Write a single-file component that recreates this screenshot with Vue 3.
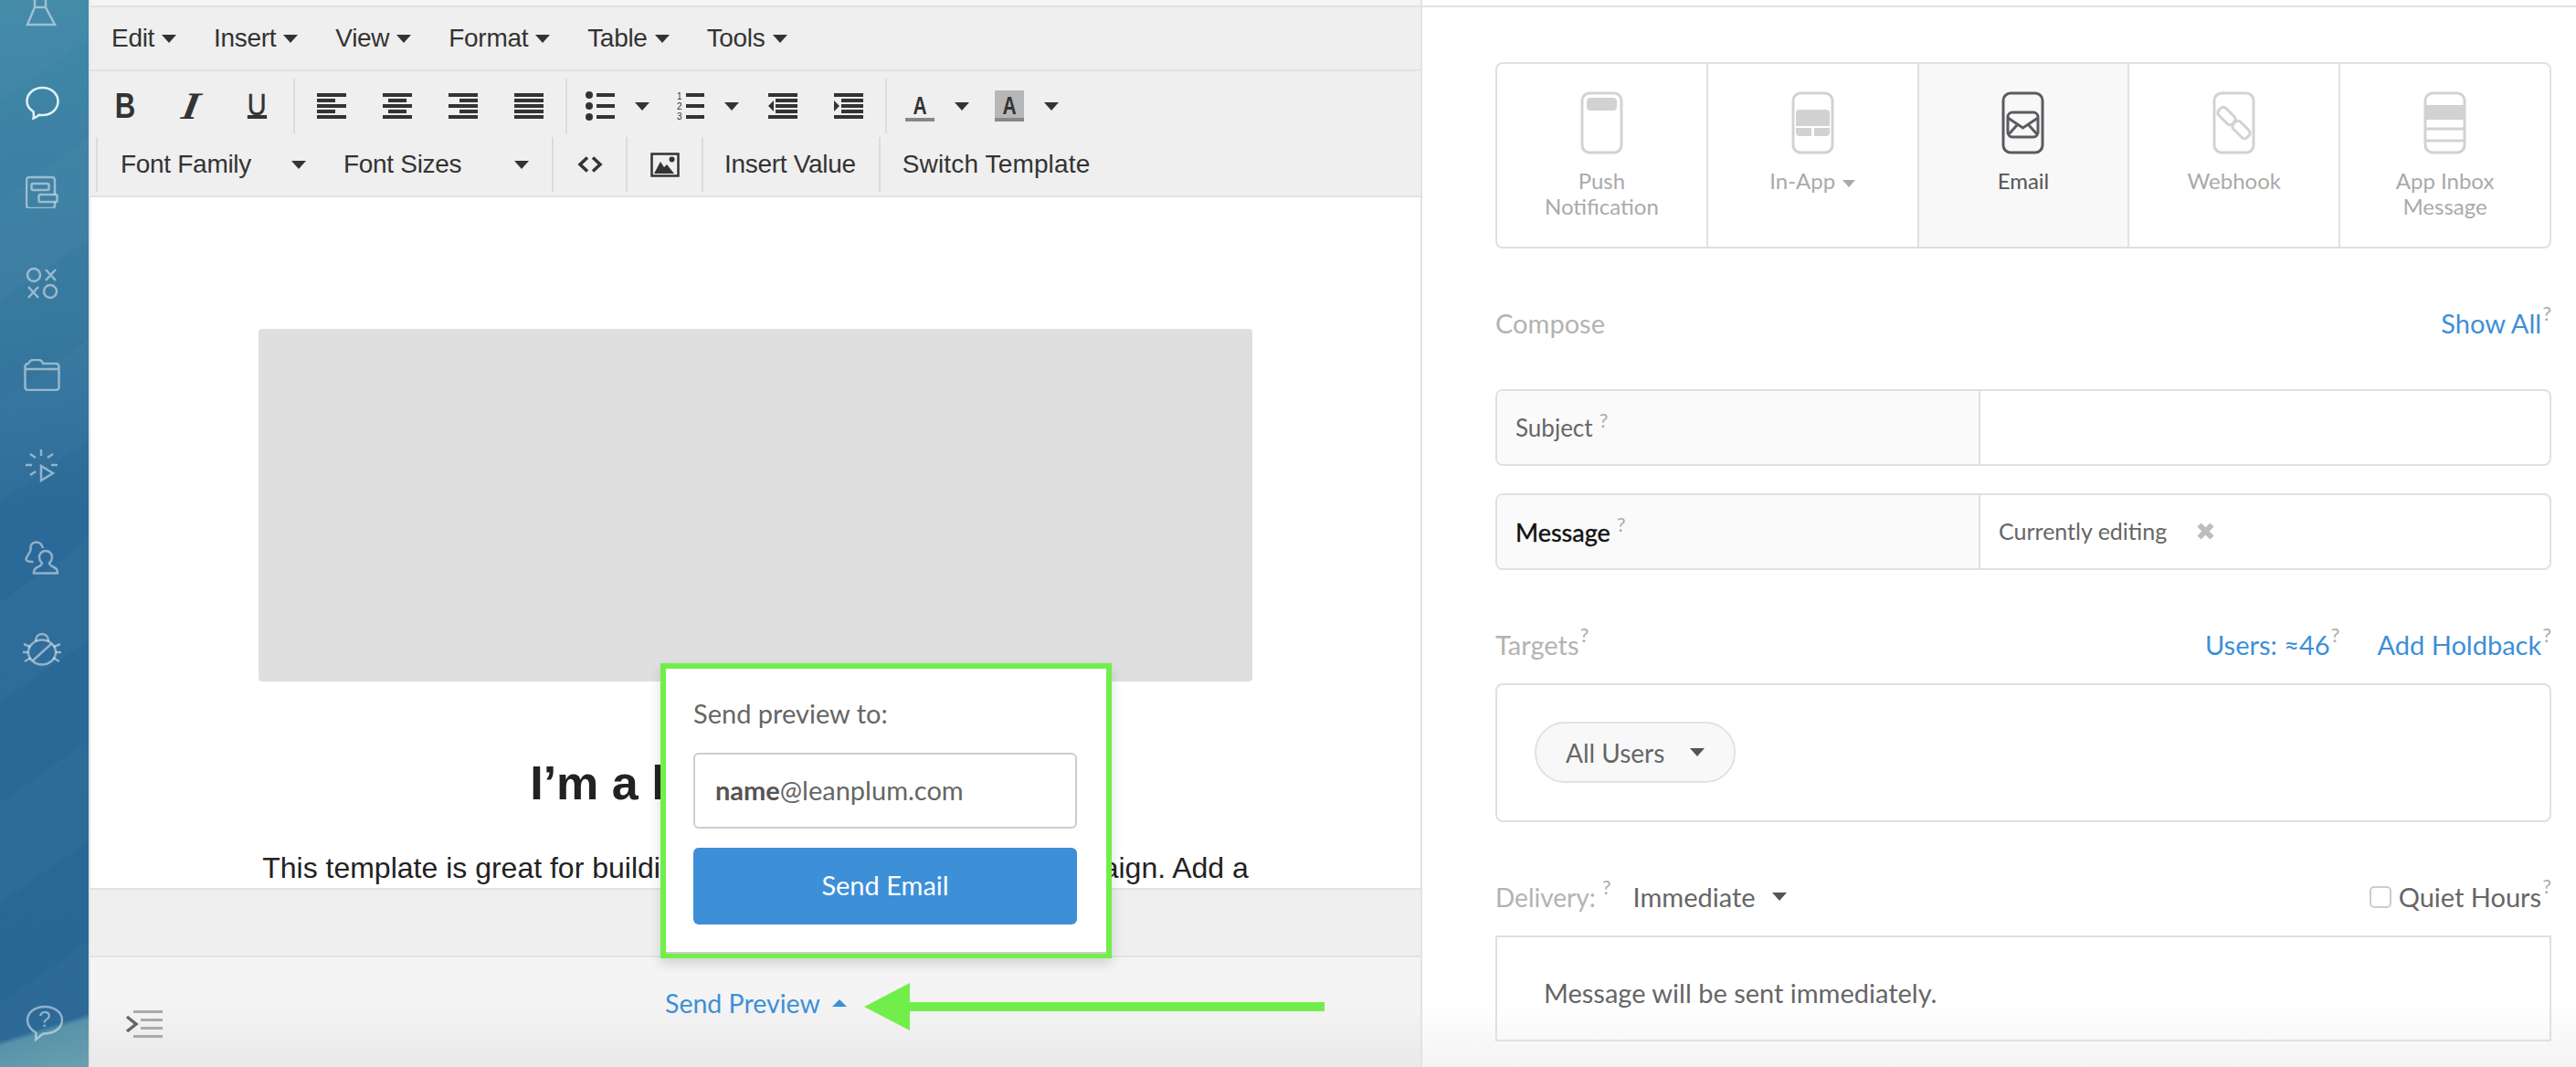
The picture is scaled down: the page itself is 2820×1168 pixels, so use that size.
<script setup>
const menus = ['Edit', 'Insert', 'View', 'Format', 'Table', 'Tools']
const rows = [2, 8, 14, 20, 26]
</script>

<template>
  <div class="app">
    <aside class="sidebar">
      <div class="slot">
        <svg width="36" height="44" viewBox="0 0 36 44" fill="none"><path d="M10 0v18L2 37h30l-10-19V0M10 18h12"/></svg>
      </div>
      <div class="slot active">
        <svg width="37" height="37" viewBox="0 0 37 37" fill="none"><path d="M8.500 28C3.500 25 1.500 21 1.500 17 1.500 8.500 9 2 18.500 2S35.500 8.500 35.500 17 28 32 18.500 32c-1.500 0-2.500-.1-3.500-.3-2 1.500-4 3-6.500 4 .7-2 .6-4 0-7.700z"/></svg>
      </div>
      <div class="slot">
        <svg width="36" height="36" viewBox="0 0 36 36" fill="none"><path d="M32 21V5a3 3 0 0 0-3-3H4a3 3 0 0 0-3 3v28a3 3 0 0 0 3 3h25a3 3 0 0 0 3-3v-4"/><rect x="6.500" y="9" width="19" height="7" rx="1.500"/><rect x="14.500" y="21" width="20" height="8" rx="1.500"/></svg>
      </div>
      <div class="slot">
        <svg width="36" height="36" viewBox="0 0 36 36" fill="none"><circle cx="9" cy="9" r="7"/><path d="M22 3l11 12M33 3L22 15M3 22l11 12M14 22L3 34"/><circle cx="27" cy="27" r="7"/></svg>
      </div>
      <div class="slot">
        <svg width="40" height="35" viewBox="0 0 40 35" fill="none"><path d="M1.500 11v20a3 3 0 0 0 3 3h31a3 3 0 0 0 3-3V8a3 3 0 0 0-3-3H21c-1-3-3-4-5-4h-6c-3 0-4 2-5 4h-.5a3 3 0 0 0-3 3v3zM1.500 11h37"/></svg>
      </div>
      <div class="slot">
        <svg width="36" height="37" viewBox="0 0 36 37" fill="none"><path d="M17 0v7M5 5l6 4M0 17h7M5 28l6-4M24 9l6-4M28 17h7"/><path d="M17 18l13 8-13 8z"/></svg>
      </div>
      <div class="slot">
        <svg width="38" height="37" viewBox="0 0 38 37" fill="none"><path d="M23 11c-4 0-7 3-7 7 0 3 1.500 5 3 6.500 0 2-2 3-5 4.500-3 1-4 3-4 6.500h26c0-3.500-1-5.500-4-6.500-3-1.500-5-2.500-5-4.500 1.500-1.500 3-3.500 3-6.500 0-4-3-7-7-7z"/><path d="M20 8c-1-4-4-7-8-6.500C8 2 6 5 6.500 9 7 13 2 16 1.500 20c0 2.500 4 3 8 3"/></svg>
      </div>
      <div class="slot">
        <svg width="42" height="37" viewBox="0 0 42 37" fill="none"><ellipse cx="21" cy="22" rx="15" ry="13.500"/><path d="M14 10c0-5 3-8 7-8s7 3 7 8M11 31L31 13M1 13l7 3M41 13l-7 3M0 22h6M42 22h-6M2 32l7-4M40 32l-7-4"/></svg>
      </div>
      <div class="slot help">
        <svg width="42" height="40" viewBox="0 0 42 40" fill="none"><path d="M21 2C10 2 2 8.500 2 16.500c0 7 5.500 12 9.500 14 0 2-.3 5-.3 7.500l8-6.500c1 .1 1.500.1 2.300 0C32 31 40 25 40 16.500 40 8.500 32 2 21 2z"/><text x="21" y="24" text-anchor="middle" class="help-q">?</text></svg>
      </div>
    </aside>

    <main class="editor">
      <div class="strip"></div>
      <nav class="menubar">
        <span v-for="m in menus" :key="m" class="menu">{{ m }}<i class="caret"></i></span>
      </nav>

      <div class="toolbar">
        <div class="row1">
          <div class="cell">
            <span class="glyph bold">B</span>
          </div>
          <div class="cell">
            <span class="glyph ital">I</span>
          </div>
          <div class="cell">
            <span class="glyph under">U</span>
          </div>
          <i class="sep"></i>
          <div class="cell">
            <svg class="ico" width="32" height="28" viewBox="0 0 32 28"><rect v-for="(y, n) in rows" :key="y" x="0" :y="y - 2" :width="n % 2 ? 20 : 32" height="4"/></svg>
          </div>
          <div class="cell">
            <svg class="ico" width="32" height="28" viewBox="0 0 32 28"><rect v-for="(y, n) in rows" :key="y" :x="n % 2 ? 6 : 0" :y="y - 2" :width="n % 2 ? 20 : 32" height="4"/></svg>
          </div>
          <div class="cell">
            <svg class="ico" width="32" height="28" viewBox="0 0 32 28"><rect v-for="(y, n) in rows" :key="y" :x="n % 2 ? 12 : 0" :y="y - 2" :width="n % 2 ? 20 : 32" height="4"/></svg>
          </div>
          <div class="cell">
            <svg class="ico" width="32" height="28" viewBox="0 0 32 28"><rect v-for="y in rows" :key="y" x="0" :y="y - 2" width="32" height="4"/></svg>
          </div>
          <i class="sep"></i>
          <div class="split">
            <svg class="ico" width="32" height="32" viewBox="0 0 32 32"><circle cx="4" cy="4" r="4"/><circle cx="4" cy="16" r="4"/><circle cx="4" cy="28" r="4"/><rect x="12" y="2" width="20" height="4"/><rect x="12" y="14" width="20" height="4"/><rect x="12" y="26" width="20" height="4"/></svg>
            <i class="caret big"></i>
          </div>
          <div class="split">
            <svg class="ico" width="32" height="32" viewBox="0 0 32 32"><text x="2" y="9" class="digit">1</text><text x="2" y="20" class="digit">2</text><text x="2" y="31" class="digit">3</text><rect x="12" y="2" width="20" height="4"/><rect x="12" y="14" width="20" height="4"/><rect x="12" y="26" width="20" height="4"/></svg>
            <i class="caret big"></i>
          </div>
          <div class="cell">
            <svg class="ico" width="32" height="28" viewBox="0 0 32 28"><rect x="0" y="0" width="32" height="4"/><rect x="8" y="6" width="24" height="4"/><rect x="8" y="12" width="24" height="4"/><rect x="8" y="18" width="24" height="4"/><rect x="0" y="24" width="32" height="4"/><path d="M0 14l6-6v12z"/></svg>
          </div>
          <div class="cell">
            <svg class="ico" width="32" height="28" viewBox="0 0 32 28"><rect x="0" y="0" width="32" height="4"/><rect x="8" y="6" width="24" height="4"/><rect x="8" y="12" width="24" height="4"/><rect x="8" y="18" width="24" height="4"/><rect x="0" y="24" width="32" height="4"/><path d="M6 14L0 8v12z"/></svg>
          </div>
          <i class="sep"></i>
          <div class="split">
            <span class="color"><span class="color-a">A</span></span>
            <i class="caret big"></i>
          </div>
          <div class="split">
            <span class="color hl"><span class="color-a">A</span></span>
            <i class="caret big"></i>
          </div>
        </div>

        <div class="row2">
          <i class="sep tall"></i>
          <div class="combo"><span>Font Family</span><i class="caret big"></i></div>
          <div class="combo"><span>Font Sizes</span><i class="caret big"></i></div>
          <i class="sep tall push"></i>
          <div class="tool code">
            <svg width="28" height="18" viewBox="0 0 28 18" fill="none"><path d="M11 1.500L3 9l8 7.500M17 1.500L25 9l-8 7.500"/></svg>
          </div>
          <i class="sep tall"></i>
          <div class="tool image">
            <svg width="32" height="27" viewBox="0 0 32 27"><rect x="1.500" y="1.500" width="29" height="24" fill="none" stroke="#333" stroke-width="2.500"/><path d="M4 23l7-13 4 6 3-3 8 10z"/><circle cx="23.500" cy="7.500" r="3"/></svg>
          </div>
          <i class="sep tall"></i>
          <div class="tool text first">Insert Value</div>
          <i class="sep tall"></i>
          <div class="tool text last">Switch Template</div>
        </div>
      </div>

      <section class="canvas">
        <div class="placeholder"></div>
        <h1 class="headline">I’m a large headline</h1>
        <p class="para">This template is great for building your next welcome email campaign. Add a</p>
      </section>

      <div class="status"></div>

      <footer class="foot">
        <svg class="indent" width="42" height="30" viewBox="0 0 42 30" fill="none"><path class="chev" d="M2 7l10 8-10 8"/><path class="lines" d="M9 1.500h32M17 10.500h24M17 19.500h24M9 28.500h32"/></svg>
        <span class="send-link">Send Preview<i class="caret up"></i></span>
      </footer>

      <div class="popover">
        <div class="pop-label">Send preview to:</div>
        <div class="pop-input"><b>name</b>@leanplum.com</div>
        <div class="pop-btn">Send Email</div>
      </div>

      <svg class="arrow" width="504" height="52" viewBox="0 0 504 52"><path d="M0 26L50 0v21h454v10H50v21z"/></svg>
    </main>

    <section class="panel">
      <div class="panel-top"></div>
      <div class="panel-body">
        <div class="tabs">
          <div class="tab">
            <svg class="phone" width="47" height="69" viewBox="0 0 47 69" fill="none"><rect x="2" y="2" width="43" height="65" rx="8"/><rect class="fill" x="7" y="7" width="33" height="14" rx="4"/></svg>
            <div class="tab-label">Push<br>Notification</div>
          </div>
          <div class="tab">
            <svg class="phone" width="47" height="69" viewBox="0 0 47 69" fill="none"><rect x="2" y="2" width="43" height="65" rx="8"/><path class="fill" d="M5 24a4 4 0 0 1 4-4h29a4 4 0 0 1 4 4v14H5zM5 40h17v9H9a4 4 0 0 1-4-4zM25 40h17v5a4 4 0 0 1-4 4H25z"/></svg>
            <div class="tab-label">In-App<i class="caret small"></i></div>
          </div>
          <div class="tab on">
            <svg class="phone dark" width="47" height="69" viewBox="0 0 47 69" fill="none"><rect x="2" y="2" width="43" height="65" rx="8"/><rect x="7" y="23" width="33" height="27" rx="5"/><path d="M7 29l16.500 11L40 29M8 47l9-10M39 47l-9-10"/></svg>
            <div class="tab-label">Email</div>
          </div>
          <div class="tab">
            <svg class="phone" width="47" height="69" viewBox="0 0 47 69" fill="none"><rect x="2" y="2" width="43" height="65" rx="8"/><rect x="5" y="21.500" width="21" height="11" rx="4" transform="rotate(45 15.500 27)"/><rect x="21" y="36.500" width="21" height="11" rx="4" transform="rotate(45 31.500 42)"/></svg>
            <div class="tab-label">Webhook</div>
          </div>
          <div class="tab">
            <svg class="phone" width="47" height="69" viewBox="0 0 47 69" fill="none"><rect x="2" y="2" width="43" height="65" rx="8"/><rect class="fill" x="2" y="15" width="43" height="16"/><path d="M2 41h43M2 54h43"/></svg>
            <div class="tab-label">App Inbox<br>Message</div>
          </div>
        </div>

        <div class="head compose">
          <span class="muted">Compose</span>
          <span class="link">Show All<sup class="q">?</sup></span>
        </div>

        <div class="field">
          <div class="field-key">Subject<sup class="q spaced">?</sup></div>
          <div class="field-val"></div>
        </div>
        <div class="field second">
          <div class="field-key strong">Message<sup class="q spaced">?</sup></div>
          <div class="field-val">
            <span class="editing">Currently editing</span>
            <svg class="close" width="19" height="19" viewBox="0 0 19 19" fill="none"><path d="M2.500 2.500l14 14M16.500 2.500l-14 14"/></svg>
          </div>
        </div>

        <div class="head targets">
          <span class="muted">Targets<sup class="q">?</sup></span>
          <span class="head-right">
            <span class="link">Users: ≈46<sup class="q">?</sup></span>
            <span class="link">Add Holdback<sup class="q">?</sup></span>
          </span>
        </div>
        <div class="box target-box">
          <div class="pill">All Users<i class="caret big"></i></div>
        </div>

        <div class="head delivery">
          <span class="del-left">
            <span class="muted del-key">Delivery:<sup class="q spaced">?</sup></span>
            <span class="plain">Immediate<i class="caret big"></i></span>
          </span>
          <span class="plain quiet"><i class="check"></i>Quiet Hours<sup class="q">?</sup></span>
        </div>
        <div class="box msg-box">Message will be sent immediately.</div>
      </div>
    </section>
  </div>
</template>

<style>
html, body { margin: 0; padding: 0; background: #fff; }
</style>

<style scoped>
.app { display: flex; width: 2820px; height: 1168px; overflow: hidden; font-family: Lato, "Open Sans", sans-serif; color: #555; background: #fff; }

.sidebar { flex: none; padding-right: 5px; width: 92px; border-right: 2px solid #e4e4e4; display: flex; flex-direction: column; align-items: center; overflow: hidden;
  background:
    linear-gradient(-17deg, rgba(120,170,178,.85) 0, rgba(100,160,176,.75) 50px, rgba(100,160,176,0) 56px),
    repeating-linear-gradient(145deg, rgba(255,255,255,.02) 0 90px, rgba(255,255,255,0) 90px 180px),
    linear-gradient(172deg, #4189a8 0, #38799f 30%, #2b6a98 48%, #286695 100%); }
.slot { flex: none; height: 100px; width: 100%; display: flex; align-items: center; justify-content: center; }
.slot:first-child { margin-top: -38px; }
.slot svg { stroke: rgba(255,255,255,.48); stroke-width: 2.500; }
.slot.active { margin-bottom: -2px; }
.slot.active svg { stroke: rgba(240,250,252,.92); }
.slot.help { margin-top: auto; height: 40px; margin-bottom: 28px; margin-left: 6px; }
.help-q { fill: rgba(255,255,255,.5); stroke: none; font: 24px "Liberation Sans", sans-serif; }

.editor { flex: none; width: 1456px; border-right: 2px solid #e2e2e2; display: flex; flex-direction: column; position: relative; font-family: "Liberation Sans", Arial, sans-serif; color: #333; }
.strip { flex: none; height: 6px; background: #f5f5f5; border-bottom: 2px solid #e2e2e2; }
.menubar { flex: none; height: 68px; background: #efefef; border-bottom: 2px solid #e2e2e2; display: flex; align-items: center; gap: 41px; padding-left: 23px; font-size: 28px; letter-spacing: -.3px; }
.menu { display: flex; align-items: center; }
.caret { display: block; flex: none; width: 0; height: 0; border-left: 8px solid transparent; border-right: 8px solid transparent; border-top: 9px solid #333; }
.menu .caret { margin-left: 8px; }
.caret.big { border-top-width: 9px; }

.toolbar { flex: none; height: 136px; background: #efefef; border-bottom: 2px solid #e2e2e2; }
.row1 { display: flex; height: 72px; padding: 8px 0 4px 2px; box-sizing: border-box; }
.cell { flex: none; width: 72px; display: flex; align-items: center; justify-content: center; }
.ico { display: block; fill: #333; }
.sep { display: block; flex: none; width: 2px; background: #dcdcdc; margin: 0 4px; }
.split { flex: none; width: 98px; display: flex; align-items: center; padding-left: 16px; box-sizing: border-box; }
.split .caret { margin-left: 22px; }
.glyph { display: block; line-height: 28px; height: 28px; color: #333; }
.bold { font: bold 39px/28px "Liberation Sans", sans-serif; transform: scaleX(.8); }
.ital { font: italic bold 42px/28px "Liberation Serif", serif; transform: skewX(-10deg) scaleX(1.15); }
.under { font: 34px/24px "Liberation Sans", sans-serif; -webkit-text-stroke: .5px #333; transform: scaleX(.85); height: 24px; line-height: 24px; border-bottom: 4px solid #333; }
.digit { font: 10px "Liberation Sans", sans-serif; fill: #333; }
.color { display: block; width: 32px; height: 34px; box-sizing: border-box; border-bottom: 4px solid #888; text-align: center; }
.color.hl { background: #b7b7b7; }
.color-a { display: block; font: bold 28px/34px "Liberation Sans", sans-serif; transform: scaleX(.75); color: #333; }

.row2 { display: flex; height: 60px; margin-left: 4px; font-size: 28px; letter-spacing: -.3px; }
.sep.tall { margin: 0; }
.sep.push { margin-left: 9px; }
.combo { flex: none; width: 244px; box-sizing: border-box; display: flex; align-items: center; justify-content: space-between; padding: 0 16px 0 25px; }
.row2 > .sep:first-child { margin-left: 2px; }
.tool { flex: none; display: flex; align-items: center; justify-content: center; }
.tool.code { width: 79px; }
.tool.code svg { stroke: #333; stroke-width: 3.500; }
.tool.image { width: 81px; }
.tool.image svg { fill: #333; }
.tool.text { padding: 0 24px; }
.tool.text.first { padding: 0 25px 0 23px; }
.tool.text.last { letter-spacing: .15px; }

.canvas { flex: 1; min-height: 0; background: #fff; overflow: hidden; display: flex; flex-direction: column; align-items: center; }
.placeholder { flex: none; width: 1088px; height: 386px; margin-top: 144px; background: #dfdfdf; border-radius: 4px; }
.headline { flex: none; margin: 81px 0 0; padding-right: 11px; font: bold 52px/60px "Liberation Sans", sans-serif; color: #222; text-align: center; }
.para { flex: none; margin: 39px 0 0; width: 1160px; font: 32px/48px "Liberation Sans", sans-serif; color: #222; text-align: center; }

.status { flex: none; height: 72px; background: #efefef; border-top: 2px solid #e2e2e2; border-bottom: 2px solid #e2e2e2; }
.foot { flex: none; height: 120px; background: linear-gradient(#f4f4f4 50px, #e9e9e9 100%); display: flex; align-items: flex-start; padding-left: 38px; box-sizing: border-box; }
.indent { display: block; margin-top: 58px; }
.chev { stroke: #666; stroke-width: 3.500; }
.lines { stroke: #aaa; stroke-width: 3; }
.send-link { margin: 34px 0 0 549px; color: #3d8fd8; font: 28.500px/32px Lato, sans-serif; display: flex; align-items: center; }
.caret.up { border-top: 0; border-bottom: 8px solid #3d8fd8; margin-left: 13px; }

.popover { position: absolute; left: 624px; top: 726px; width: 494px; height: 323px; box-sizing: border-box; border: solid #72ee4a; border-width: 6px 6px 5px; background: #fff; padding: 33px 30px 0; box-shadow: inset 0 -2px 0 #ccc, 0 6px 12px rgba(0,0,0,.14); font-family: Lato, sans-serif; color: #666; }
.pop-label { font-size: 29px; line-height: 32px; }
.pop-input { margin-top: 27px; height: 83px; width: 420px; box-sizing: border-box; border: 2px solid #ccc; border-radius: 6px; background: #fff; font-size: 29px; line-height: 78px; padding-left: 22px; }
.pop-input b { color: #555; }
.pop-btn { margin-top: 21px; height: 84px; width: 420px; border-radius: 6px; background: #3d8fd8; color: #fff; font-size: 29px; line-height: 82px; text-align: center; }
.arrow { position: absolute; left: 847px; top: 1076px; fill: #72ee4a; }

.panel { flex: 1; min-width: 0; background: linear-gradient(#fff 1100px, #f3f3f3 100%); }
.panel-top { height: 6px; border-bottom: 2px solid #e2e2e2; }
.panel-body { padding: 60px 27px 0 80px; }
.tabs { display: flex; height: 204px; box-sizing: border-box; border: 2px solid #e0e0e0; border-radius: 8px; overflow: hidden; }
.tab { flex: 1; min-width: 0; border-right: 2px solid #e0e0e0; padding-top: 30px; text-align: center; color: #aaa; font-size: 24px; line-height: 28px; }
.tab:last-child { border-right: 0; }
.tab.on { background: #f8f8f8; color: #555; }
.phone { display: block; margin: 0 auto; stroke: #d2d2d2; stroke-width: 3; }
.phone .fill { fill: #d2d2d2; stroke: none; }
.phone.dark { stroke: #5b5b60; }
.tab-label { margin-top: 15px; display: block; }
.caret.small { display: inline-block; vertical-align: middle; margin-left: 8px; border-left-width: 7px; border-right-width: 7px; border-top: 8px solid #aaa; }

.head { display: flex; justify-content: space-between; align-items: center; height: 56px; box-sizing: border-box; padding-bottom: 3px; font-size: 29px; }
.compose { margin-top: 55px; margin-bottom: 43px; }
.targets { margin-top: 55px; margin-bottom: 13px; }
.delivery { margin-top: 55px; margin-bottom: 13px; }
.muted { color: #b3b3b0; }
.del-key { font-size: 28px; }
.link { color: #3d8fd8; }
.head-right { display: flex; gap: 41px; }
.q { font-size: 22px; line-height: 0; color: #aaa; vertical-align: baseline; position: relative; top: -14px; margin-left: 1px; }
.q.spaced { margin-left: 7px; font-size: 22px; }

.field { display: flex; height: 84px; box-sizing: border-box; border: 2px solid #e0e0e0; border-radius: 8px; overflow: hidden; }
.field.second { margin-top: 30px; }
.field-key { flex: none; width: 529px; box-sizing: border-box; background: #fafafa; border-right: 2px solid #e0e0e0; padding-left: 20px; display: flex; align-items: center; font-size: 26px; color: #666; }
.field-key.strong { color: #111; -webkit-text-stroke: .4px #111; font-size: 27px; }
.field-key.strong .q { -webkit-text-stroke: 0; }
.field-key .q { top: -8px; }
.field-val { flex: 1; display: flex; align-items: center; padding: 0 0 2px 20px; }
.editing { font-size: 25px; color: #666; }
.close { display: block; margin-left: 33px; stroke: #bdbdbd; stroke-width: 6; }

.box { border: 2px solid #e0e0e0; box-sizing: border-box; }
.target-box { height: 152px; border-radius: 8px; padding: 40px 0 0 41px; }
.pill { display: inline-flex; align-items: center; height: 67px; width: 220px; box-sizing: border-box; border: 2px solid #e2e2e2; border-radius: 33px; background: #f8f8f8; padding-left: 32px; font-size: 28px; color: #666; }
.pill .caret { margin-left: 28px; border-top-color: #555; }
.del-left { display: flex; align-items: center; }
.plain { display: inline-flex; align-items: center; color: #666; }
.del-left .plain { margin-left: 24px; }
.del-left .caret { margin-left: 18px; border-top-color: #555; }
.check { display: block; width: 24px; height: 24px; box-sizing: border-box; border: 2px solid #ccc; border-radius: 5px; background: #fff; margin-right: 8px; }
.quiet .q { align-self: flex-start; top: 6px; }
.msg-box { height: 116px; padding: 43px 0 0 51px; font-size: 29px; line-height: 36px; color: #666; background: transparent; }
</style>
